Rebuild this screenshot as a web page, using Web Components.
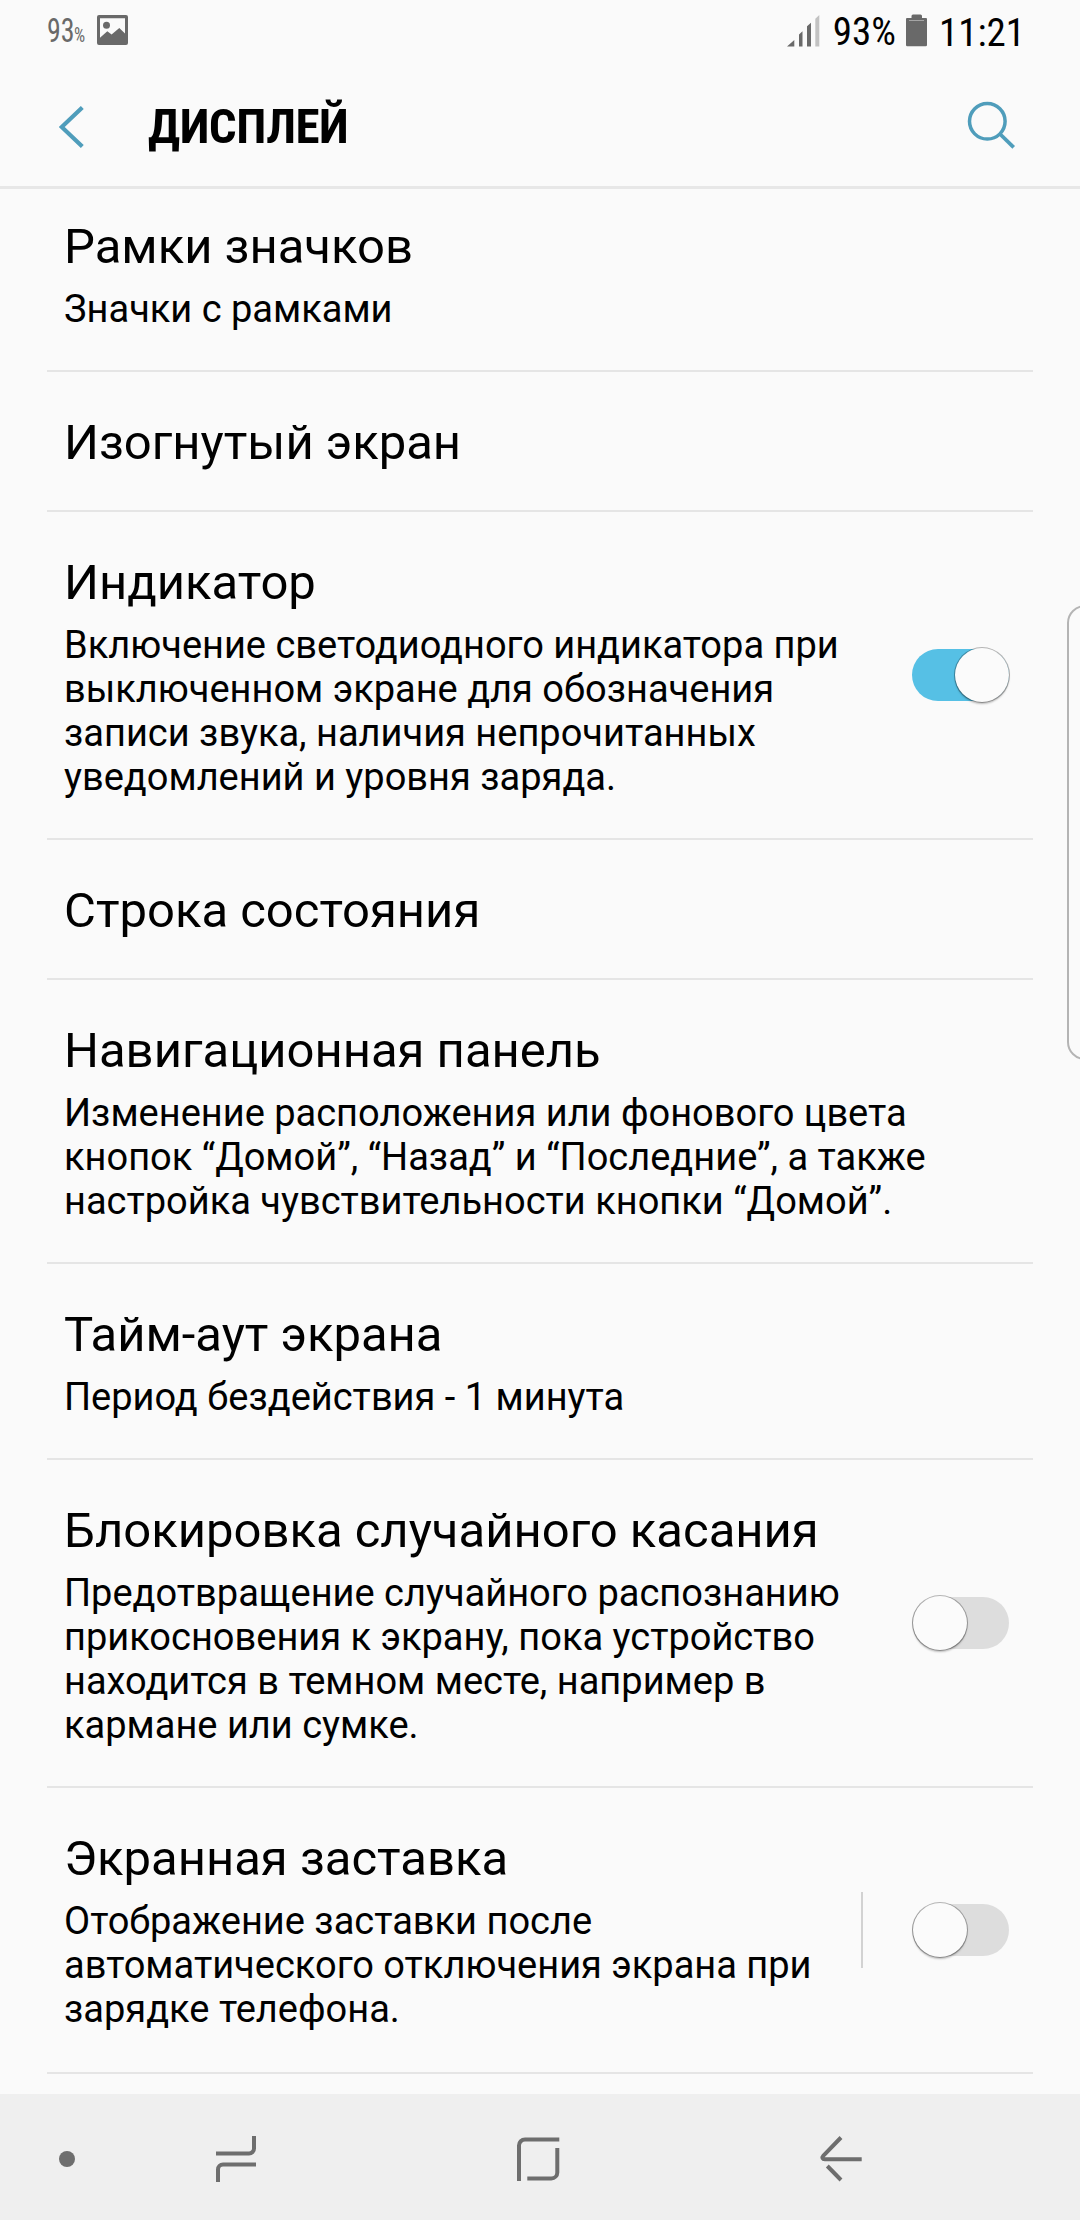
<!DOCTYPE html>
<html lang="ru">
<head>
<meta charset="utf-8">
<title>Дисплей</title>
<style>
    body {
        margin: 0;
        background: #fafafa;
        color: #000;
        font-family: Roboto, "Noto Sans", sans-serif;
    }
</style>
</head>
<body>
<display-screen></display-screen>

<script>
class StatusBar extends HTMLElement{
    constructor(){
        super();
        this.attachShadow({mode : 'open'});
    }

    connectedCallback(){
        this.shadowRoot.innerHTML = `
        <style>${this.getStyle()}</style>
        <div class="left">
            <span class="level">93</span><span class="percent">%</span>
            <svg class="picture" width="31" height="30" viewBox="0 0 31 30">
                <path fill="#696969" fill-rule="evenodd" d="M2 0H29a2 2 0 0 1 2 2V28a2 2 0 0 1-2 2H2a2 2 0 0 1-2-2V2a2 2 0 0 1 2-2ZM3 3.3V22.7L10.3 16.3 14.6 19.6 22.3 13 28 18.6V3.3Z"/>
                <circle cx="9.5" cy="10.2" r="3.5" fill="#696969"/>
            </svg>
        </div>
        <div class="right">
            <svg class="signal" width="33" height="32" viewBox="0 0 33 32">
                <path fill="#696969" d="M0 31.5L7.3 25V31.5ZM12 31.5V19.5L15.5 16.3V31.5ZM20 31.5V11.2L24 7.8V31.5Z"/>
                <path fill="#c2c2c2" d="M28.3 31.5V3.8L32.3 0V31.5Z"/>
            </svg>
            <span class="charge">93%</span>
            <svg class="battery" width="21" height="33" viewBox="0 0 21 33">
                <path fill="#696969" d="M5.5 4V2a1.5 1.5 0 0 1 1.5-1.5H14.5a1.5 1.5 0 0 1 1.5 1.5V4H20a1 1 0 0 1 1 1V31a1.3 1.3 0 0 1-1.3 1.3H1.3A1.3 1.3 0 0 1 0 31V5a1 1 0 0 1 1-1Z"/>
                <path stroke="#a5a5a5" d="M3 6.5H18"/>
            </svg>
            <span class="time">11:21</span>
        </div>
        `
    }

    getStyle(){
        return`
        :host {
            display: flex;
            justify-content: space-between;
            height: 63px;
            padding: 0 58px 0 47px;
            box-sizing: border-box;
        }

        .left, .right {
            display: flex;
            align-items: flex-start;
        }

        span {
            font-stretch: condensed;
            font-family: "Roboto Condensed", Roboto, sans-serif;
            white-space: nowrap;
        }

        .level {
            width: 27px;
            margin-top: 10px;
            font-size: 34px;
            line-height: 40px;
            color: #696969;
            transform: scaleX(.82);
            transform-origin: 0 0;
        }

        .percent {
            width: 23px;
            margin-top: 23px;
            font-size: 20px;
            line-height: 24px;
            color: #696969;
            transform: scaleX(.88);
            transform-origin: 0 0;
        }

        .picture {
            margin-top: 15px;
        }

        .signal {
            margin: 15px 13px 0 0;
        }

        .charge, .time {
            font-size: 39px;
            line-height: 46px;
        }

        .charge {
            margin-top: 9px;
        }

        .battery {
            margin: 14px 12px 0 10px;
        }

        .time {
            width: 83px;
            margin-top: 10px;
        }
        `
    }
}

customElements.define('status-bar', StatusBar);


class ScreenHeader extends HTMLElement{
    constructor(){
        super();
        this.attachShadow({mode : 'open'});
    }

    connectedCallback(){
        this.shadowRoot.innerHTML = `
        <style>${this.getStyle()}</style>
        <svg class="back" width="26" height="42" viewBox="0 0 26 42">
            <path d="M23.3 1.5L2.7 21 23.3 40.5" stroke-width="4.2"/>
        </svg>
        <h1><slot></slot></h1>
        <svg class="search" width="48" height="48" viewBox="0 0 48 48">
            <circle cx="20.3" cy="20.3" r="17.8" stroke-width="3.5"/>
            <path d="M33 33L46.7 46.3" stroke-width="3.8"/>
        </svg>
        `
    }

    getStyle(){
        return`
        :host {
            display: flex;
            align-items: center;
            height: 126px;
            padding: 0 65px 0 59px;
            border-bottom: 3px solid #e7e7e7;
            box-sizing: border-box;
        }

        svg {
            fill: none;
            stroke: #4f9dbb;
        }

        .back {
            margin-top: 4px;
        }

        h1 {
            flex: 1;
            margin: 5px 0 0 63px;
            font: bold 49px/58px "Roboto Condensed", Roboto, sans-serif;
            font-stretch: condensed;
            letter-spacing: -.5px;
        }
        `
    }
}

customElements.define('screen-header', ScreenHeader);


class ToggleSwitch extends HTMLElement{
    constructor(){
        super();
        this.attachShadow({mode : 'open'});
    }

    connectedCallback(){
        this.shadowRoot.innerHTML = `
        <style>${this.getStyle()}</style>
        <div class="track"><div class="thumb"></div></div>
        `
    }

    getStyle(){
        return`
        :host {
            display: block;
            flex: none;
        }

        .track {
            display: flex;
            align-items: center;
            width: 97px;
            height: 52px;
            border-radius: 26px;
            background: #dddddd;
        }

        .thumb {
            flex: none;
            width: 54px;
            height: 54px;
            margin-left: 1px;
            border-radius: 50%;
            background: #fbfbfb;
            box-shadow: 0 0 0 1px rgba(0,0,0,.28), 0 2px 2px rgba(0,0,0,.26);
        }

        :host([on]) .track {
            justify-content: flex-end;
            background: #56c0e5;
        }
        `
    }
}

customElements.define('toggle-switch', ToggleSwitch);


// One settings row: title, optional summary, optional control on the right
class SettingRow extends HTMLElement{
    constructor(){
        super();
        this.attachShadow({mode : 'open'});
    }

    connectedCallback(){
        this.shadowRoot.innerHTML = `
        <style>${this.getStyle()}</style>
        <div class="text">
            <div class="title">${this.getAttribute('label')}</div>
            <div class="summary"><slot></slot></div>
        </div>
        <slot name="control"></slot>
        `
    }

    getStyle(){
        return`
        :host {
            display: flex;
            align-items: center;
            margin: 0 47px;
            padding: 0 24px 0 17px;
            border-bottom: 2px solid #e5e5e5;
        }

        .text {
            flex: 1;
            padding: 42px 0 39px;
        }

        .title {
            font-size: 49px;
            line-height: 57px;
        }

        .summary {
            font-size: 38px;
            line-height: 44px;
        }

        :host([summary]) .summary {
            margin-top: 12px;
        }

        :host([split]) .text {
            padding-bottom: 41px;
        }

        ::slotted(toggle-switch) {
            margin-left: 60px;
        }

        :host([split]) ::slotted(toggle-switch) {
            margin-left: 9px;
            padding: 12px 0 12px 49px;
            border-left: 2px solid #d2d2d2;
        }
        `
    }
}

customElements.define('setting-row', SettingRow);


class NavigationKeys extends HTMLElement{
    constructor(){
        super();
        this.attachShadow({mode : 'open'});
    }

    connectedCallback(){
        this.shadowRoot.innerHTML = `
        <style>${this.getStyle()}</style>
        <svg viewBox="0 0 48 48"><circle cx="24" cy="24" r="8" fill="#6e6e6e" stroke="none"/></svg>
        <svg viewBox="0 0 48 48">
            <path d="M4 18.5H37a5 5 0 0 0 5-5V1M44 29.5H11a5 5 0 0 0-5 5V47"/>
        </svg>
        <svg viewBox="0 0 48 48">
            <path d="M45.3 4.5H11a6 6 0 0 0-6 6V46M43.3 13V37.4a6 6 0 0 1-6 6H13.3"/>
        </svg>
        <svg viewBox="0 0 48 48">
            <path d="M24 2.5L6.2 20.8C4.6 22.5 5.5 24.3 7.8 24.3H44.7M10.3 31L24 45"/>
        </svg>
        `
    }

    getStyle(){
        return`
        :host {
            display: grid;
            grid-template-columns: 134px 204px 400px 206px;
            align-items: center;
            justify-items: center;
            height: 126px;
            padding-top: 4px;
            background: #efefef;
            box-sizing: border-box;
        }

        svg {
            width: 48px;
            height: 48px;
            fill: none;
            stroke: #6e6e6e;
            stroke-width: 4;
        }
        `
    }
}

customElements.define('navigation-keys', NavigationKeys);


class DisplayScreen extends HTMLElement{
    constructor(){
        super();
        this.attachShadow({mode : 'open'});
    }

    connectedCallback(){
        this.shadowRoot.innerHTML = `
        <style>${this.getStyle()}</style>
        <status-bar></status-bar>
        <screen-header>ДИСПЛЕЙ</screen-header>
        <main>
            <setting-row label="Рамки значков" summary>Значки с рамками</setting-row>
            <setting-row label="Изогнутый экран"></setting-row>
            <setting-row label="Индикатор" summary>Включение светодиодного индикатора при выключенном экране для обозначения записи звука, наличия непрочитанных уведомлений и уровня заряда.<toggle-switch slot="control" on></toggle-switch></setting-row>
            <setting-row label="Строка состояния"></setting-row>
            <setting-row label="Навигационная панель" summary>Изменение расположения или фонового цвета кнопок “Домой”, “Назад” и “Последние”, а также настройка чувствительности кнопки “Домой”.</setting-row>
            <setting-row label="Тайм-аут экрана" summary>Период бездействия - 1 минута</setting-row>
            <setting-row label="Блокировка случайного касания" summary>Предотвращение случайного распознанию прикосновения к экрану, пока устройство находится в темном месте, например в кармане или сумке.<toggle-switch slot="control"></toggle-switch></setting-row>
            <setting-row label="Экранная заставка" summary split>Отображение заставки после автоматического отключения экрана при зарядке телефона.<toggle-switch slot="control"></toggle-switch></setting-row>
        </main>
        <navigation-keys></navigation-keys>
        <div class="edge-handle"></div>
        `
    }

    getStyle(){
        return`
        :host {
            display: flex;
            flex-direction: column;
            position: relative;
            width: 1080px;
            height: 2220px;
            overflow: hidden;
            background: #fafafa;
        }

        main {
            flex: 1;
            min-height: 0;
            overflow: hidden;
        }

        /* the list is scrolled a little under the header */
        main setting-row:first-child {
            margin-top: -13px;
        }

        /* edge panel handle, cut off by the right side of the screen */
        .edge-handle {
            position: absolute;
            top: 605px;
            right: -24px;
            width: 37px;
            height: 455px;
            border: 2px solid #b4b4b4;
            border-radius: 18px;
            box-sizing: border-box;
        }
        `
    }
}

customElements.define('display-screen', DisplayScreen);
</script>
</body>
</html>
